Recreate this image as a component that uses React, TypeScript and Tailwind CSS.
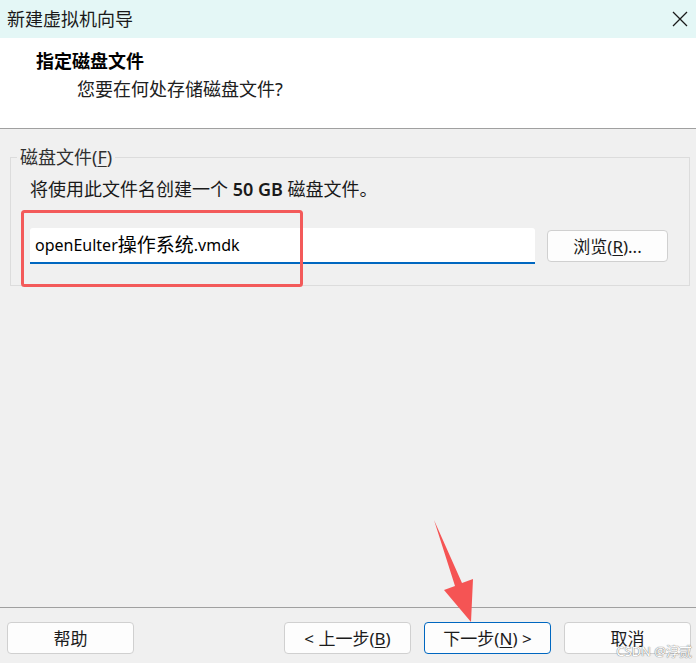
import React from 'react';

const font = "font-['Noto_Sans','Noto_Sans_CJK_SC',sans-serif]";

function Btn({ children, primary, w = 'w-[127px]' }: { children: React.ReactNode; primary?: boolean; w?: string }) {
  return (
    <button
      className={`${w} h-[32px] rounded-[4px] bg-[#fdfdfd] text-[17px] leading-none text-[#1b1b1b] flex items-center justify-center ${
        primary ? 'border border-[#0067c0]' : 'border border-[#d0d0d0]'
      }`}
    >
      {children}
    </button>
  );
}

export default function App() {
  return (
    <div className={`relative w-[696px] h-[663px] flex flex-col bg-[#f0f0f0] overflow-hidden ${font}`}>
      {/* Title bar */}
      <div className="h-[38px] bg-[#e4f7f6] flex items-center justify-between pl-[7px] pr-[8px]">
        <span className="text-[18px] text-[#1a1a1a]">新建虚拟机向导</span>
        <svg width="16" height="16" viewBox="0 0 16 16">
          <path d="M1 1 L15 15 M15 1 L1 15" stroke="#1a1a1a" strokeWidth="1.3" />
        </svg>
      </div>

      {/* Header */}
      <div className="h-[91px] bg-white border-b border-[#a0a0a0] pl-[36px] pt-[11px]">
        <div className="text-[18px] leading-[24px] font-bold text-black">指定磁盘文件</div>
        <div className="mt-[4px] ml-[41px] text-[18px] leading-[24px] text-[#202020]">您要在何处存储磁盘文件?</div>
      </div>

      {/* Body */}
      <div className="flex-1">
        <fieldset className="mt-[17px] ml-[10px] mr-[6px] border border-[#dcdcdc] pb-[21px]">
          <legend className="ml-[6px] px-[3px] h-[22px] leading-[22px] text-[18px] text-[#303030]">
            磁盘文件(<span className="underline underline-offset-2">F</span>)
          </legend>
          <div className="pl-[19px] pr-[20px]">
            <div className="pt-[9px] text-[18px] leading-[24px] text-[#1a1a1a]">
              将使用此文件名创建一个 <span className="font-semibold">50 GB</span> 磁盘文件。
            </div>
            <div className="mt-[27px] flex items-center gap-[12px]">
              <div className="w-[505px] h-[36px] bg-white rounded-t-[3px] border-b-2 border-[#0067c0] pl-[5px] flex items-center text-[19px] text-black">
                <span className="text-[16px]">openEulter</span>
                <span>操作系统</span>
                <span className="text-[16px]">.vmdk</span>
              </div>
              <Btn w="w-[121px]">
                浏览(<span className="underline underline-offset-2">R</span>)...
              </Btn>
            </div>
          </div>
        </fieldset>
      </div>

      {/* Footer */}
      <div className="h-[56px] border-t border-[#a0a0a0] flex items-start pt-[14px] pl-[7px] pr-[5px]">
        <Btn>帮助</Btn>
        <div className="ml-auto flex gap-[13px]">
          <Btn>
            &lt; 上一步(<span className="underline underline-offset-2">B</span>)
          </Btn>
          <Btn primary>
            下一步(<span className="underline underline-offset-2">N</span>) &gt;
          </Btn>
          <Btn>取消</Btn>
        </div>
      </div>

      {/* Annotations */}
      <svg className="absolute inset-0 pointer-events-none" width="696" height="663" viewBox="0 0 696 663">
        <rect x="22.5" y="211.5" width="279" height="74" rx="2" fill="none" stroke="#f35a5a" strokeWidth="3" />
        <polygon points="434,520 462,583 473,579 471,622 444,590 455,586" fill="#f55454" />
      </svg>
      <div className="absolute right-[4px] bottom-[5px] text-[13px] leading-none text-white [text-shadow:0_0_1px_#777,0_0_1px_#777] pointer-events-none">
        CSDN @淳贰
      </div>
    </div>
  );
}
